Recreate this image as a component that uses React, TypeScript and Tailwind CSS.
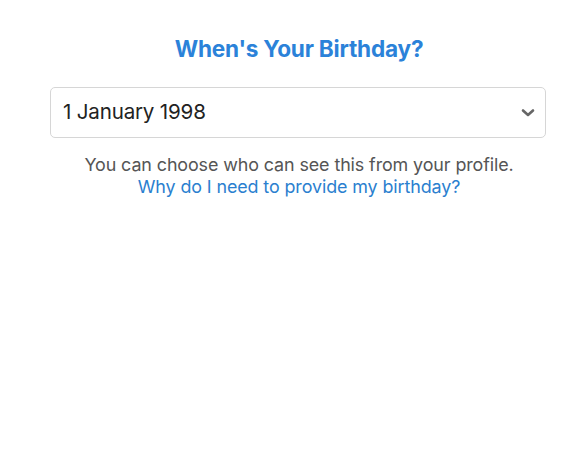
import React from "react";

export default function App() {
  return (
    <div className="w-[585px] h-[451px] bg-white" style={{ fontFamily: "Inter, 'Noto Sans', sans-serif" }}>
      <div className="flex flex-col items-center pt-[36px] pl-[13px]">
        <h1 className="text-[22.6px] leading-[26px] font-bold text-[#2b82d9] tracking-[-0.2px]">When's Your Birthday?</h1>
        <div className="mt-[25px] mr-[2px] w-[496px] h-[51px] border border-[#d6d6d6] rounded-[5px] flex items-center justify-between pl-[12px] pr-[10px]">
          <span className="text-[20.6px] text-[#222] tracking-[-0.2px]">1 January 1998</span>
          <svg width="14" height="10" viewBox="0 0 14 10">
            <path d="M2 2.5 L7 7 L12 2.5" stroke="#666" strokeWidth="2.6" fill="none" strokeLinecap="round" strokeLinejoin="round" />
          </svg>
        </div>
        <p className="mt-[16px] text-[17.9px] leading-[22px] text-[#555] tracking-[-0.1px]">You can choose who can see this from your profile.</p>
        <p className="text-[17.9px] leading-[22px] text-[#2b7fcf] tracking-[-0.1px]">Why do I need to provide my birthday?</p>
      </div>
    </div>
  );
}
